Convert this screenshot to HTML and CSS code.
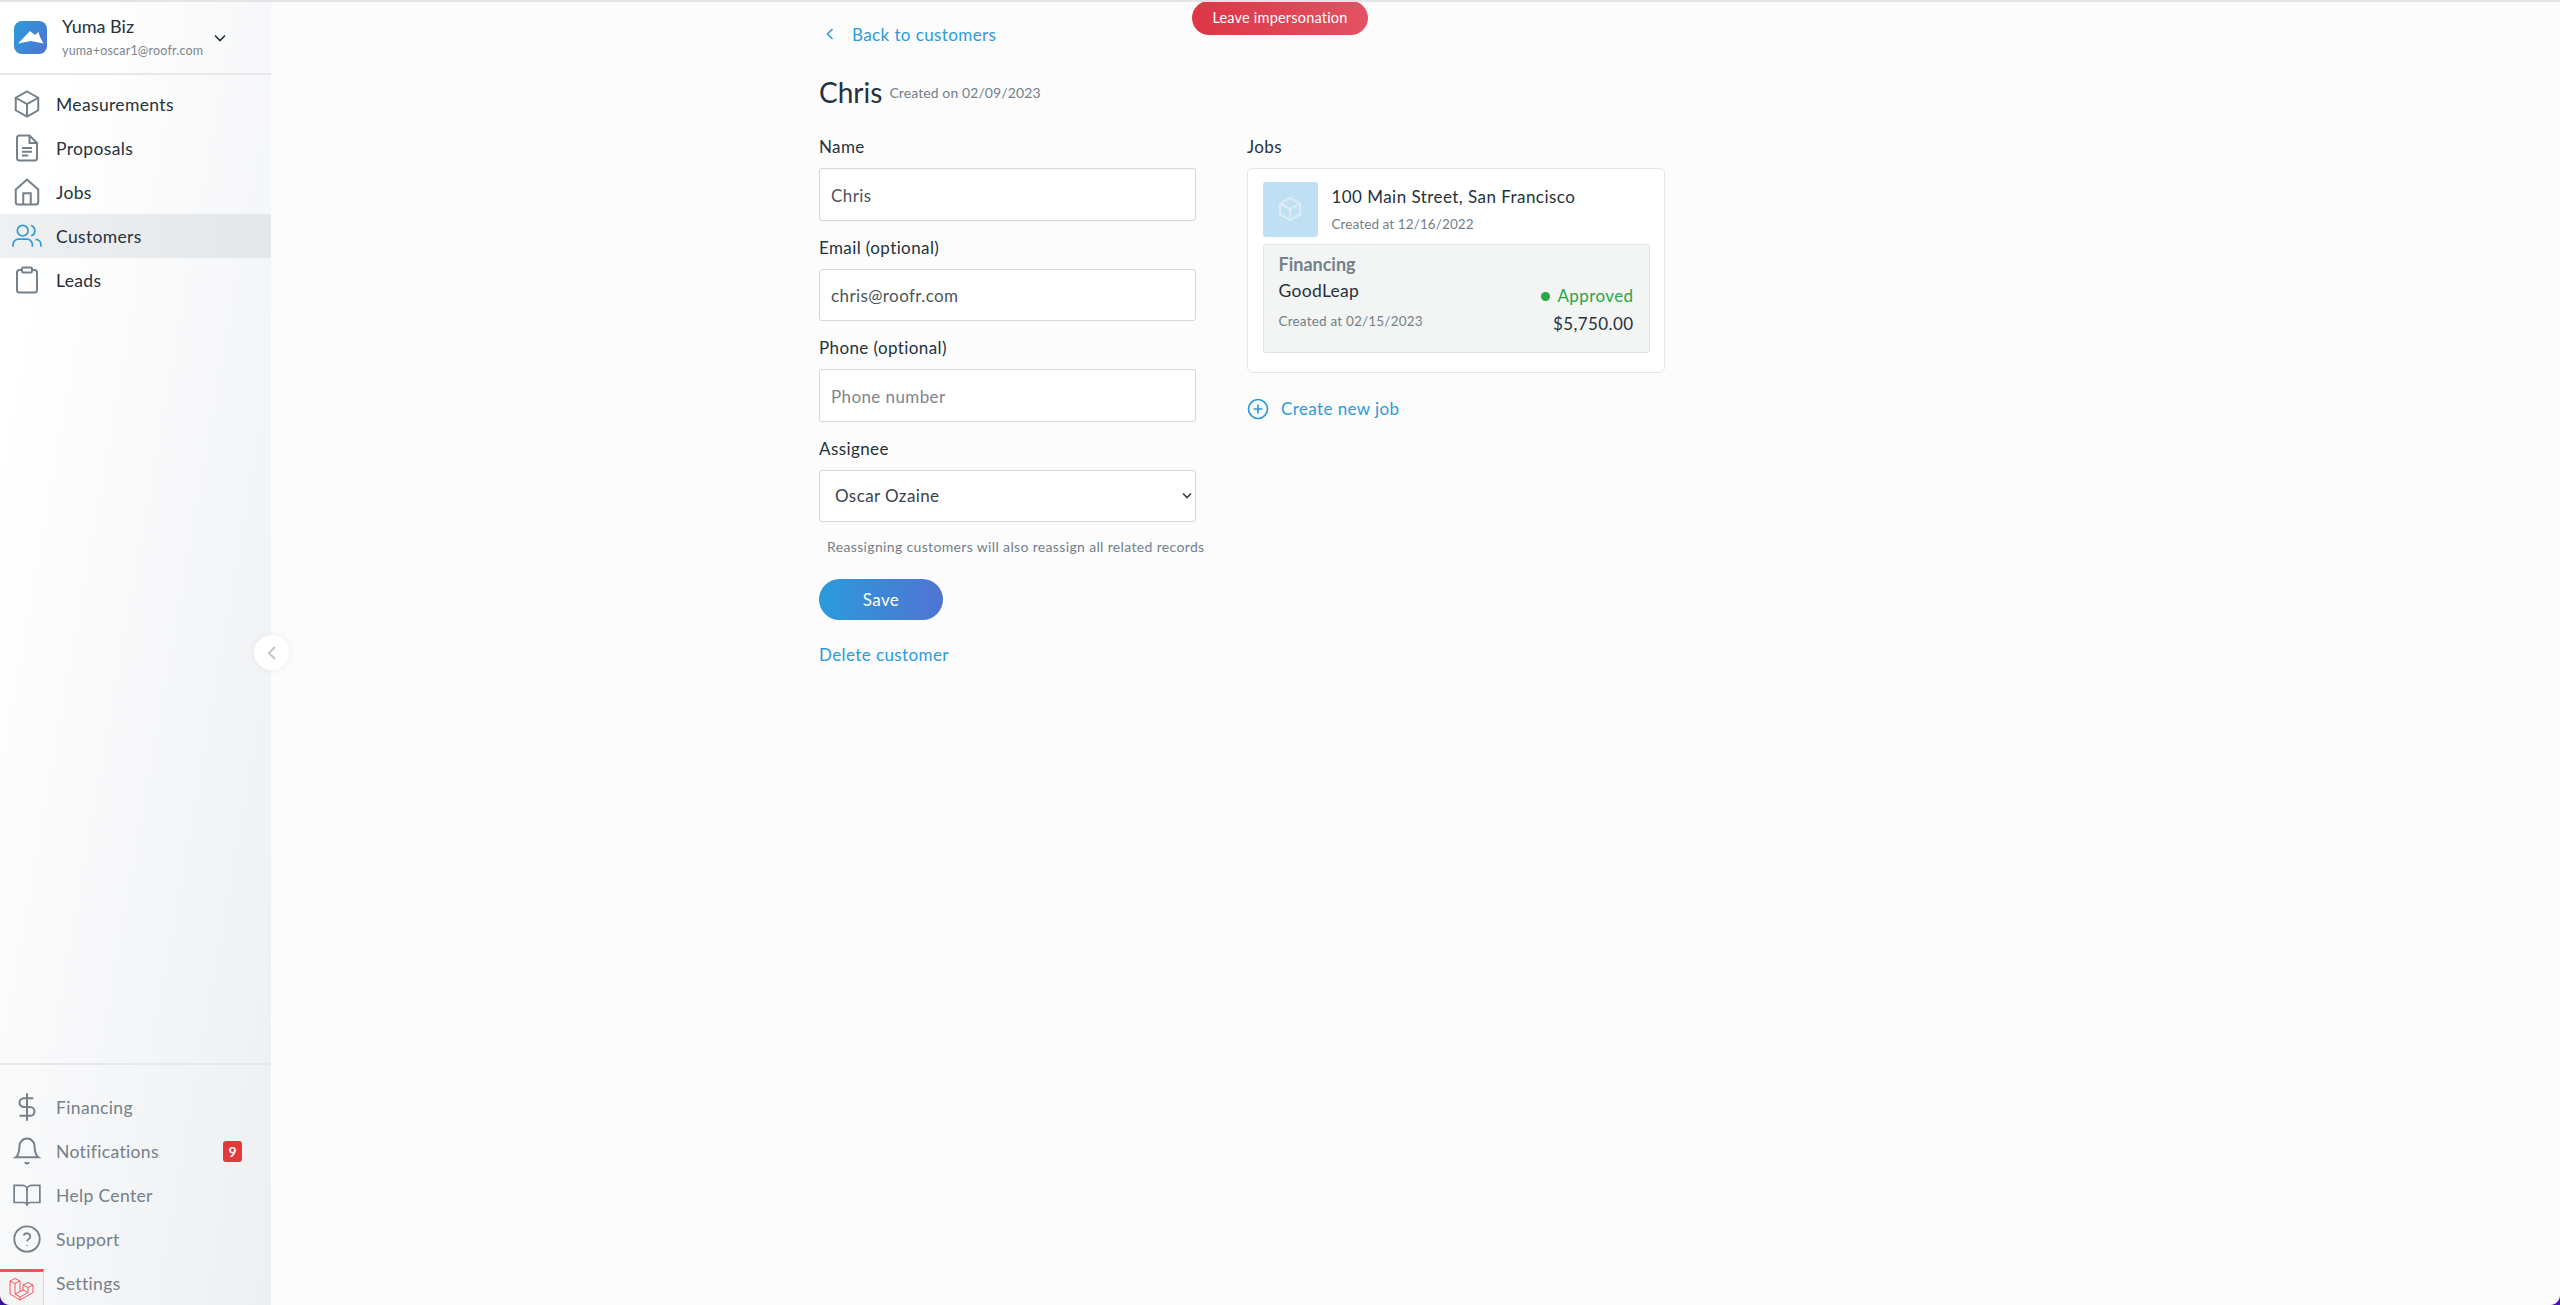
FILE: index.html
```html
<!DOCTYPE html>
<html lang="en">
  <head>
    <meta charset="UTF-8" />
    <title>Chris - Customers</title>
    <link rel="stylesheet" href="styles.css">
  </head>
  <body>
    <aside class="sidebar">
      <div class="account">
        <span class="logo">
          <svg width="33" height="33" viewBox="0 0 33 33"><path d="M4 22.5 L16 10 L21 14 L24.5 11 L26 16 L29.5 22.5 L17 20 Z" fill="#fff"/></svg>
        </span>
        <div class="account-text">
          <div class="account-name">Yuma Biz</div>
          <div class="account-email">yuma+oscar1@roofr.com</div>
        </div>
        <svg class="account-caret" width="16" height="16" viewBox="0 0 16 16"><path d="M3 5.5 L8 10.5 L13 5.5" fill="none" stroke="#25323c" stroke-width="1.6"/></svg>
      </div>

      <nav class="nav">
        <a class="nav-item">
          <svg class="nav-icon" viewBox="0 0 24 24"><path d="M12 2 L21 7 V17 L12 22 L3 17 V7 Z M3 7 L12 12 L21 7 M12 12 V22"/></svg>
          Measurements
        </a>
        <a class="nav-item">
          <svg class="nav-icon" viewBox="0 0 24 24"><path d="M4 4 a2 2 0 0 1 2 -2 H14 L20 8 V20 a2 2 0 0 1 -2 2 H6 a2 2 0 0 1 -2 -2 Z M14 2 V8 H20 M8 12 H16 M8 15 H16 M8 18 H13"/></svg>
          Proposals
        </a>
        <a class="nav-item">
          <svg class="nav-icon" viewBox="0 0 24 24"><path d="M3 10 L12 2 L21 10 V20 a2 2 0 0 1 -2 2 H5 a2 2 0 0 1 -2 -2 Z M9 22 V13 H15 V22"/></svg>
          Jobs
        </a>
        <a class="nav-item active">
          <svg class="nav-icon" viewBox="0 0 28 28"><circle cx="10" cy="9" r="5"/><path d="M1 24 V22 a5 5 0 0 1 5 -5 H14 a5 5 0 0 1 5 5 V24 M18 4.3 a5 5 0 0 1 0 9.4 M22 17.2 a5 5 0 0 1 5 4.8 V24"/></svg>
          Customers
        </a>
        <a class="nav-item">
          <svg class="nav-icon" viewBox="0 0 24 24"><path d="M8 4 H6 a2 2 0 0 0 -2 2 V20 a2 2 0 0 0 2 2 H18 a2 2 0 0 0 2 -2 V6 a2 2 0 0 0 -2 -2 H16 M9 2 H15 a1 1 0 0 1 1 1 V5 a1 1 0 0 1 -1 1 H9 a1 1 0 0 1 -1 -1 V3 a1 1 0 0 1 1 -1 Z"/></svg>
          Leads
        </a>
      </nav>

      <nav class="nav nav-bottom">
        <a class="nav-item muted">
          <svg class="nav-icon" viewBox="0 0 24 24"><path d="M12 1 V23 M17 5 H9.5 a3.5 3.5 0 0 0 0 7 H14.5 a3.5 3.5 0 0 1 0 7 H6"/></svg>
          Financing
        </a>
        <a class="nav-item muted">
          <svg class="nav-icon" viewBox="0 0 24 24"><path d="M18 8 a6 6 0 0 0 -12 0 C6 15 3 17 3 17 H21 S18 15 18 8 M10.3 21 a2 2 0 0 0 3.4 0"/></svg>
          Notifications
          <span class="badge">9</span>
        </a>
        <a class="nav-item muted">
          <svg class="nav-icon" viewBox="-1 -2 28 28"><path d="M1 3 H9 a4 4 0 0 1 4 4 V22 a3 3 0 0 0 -3 -3 H1 Z M25 3 H17 a4 4 0 0 0 -4 4 V22 a3 3 0 0 1 3 -3 H25 Z"/></svg>
          Help Center
        </a>
        <a class="nav-item muted">
          <svg class="nav-icon" viewBox="-1 -1 26 26"><circle cx="12" cy="12" r="11"/><path d="M9 9 a3 3 0 0 1 5.8 1 c0 2 -2.8 2.5 -2.8 4 M12 17.5 V18"/></svg>
          Support
        </a>
        <a class="nav-item muted">
          <span class="nav-spacer"></span>
          Settings
        </a>
      </nav>

      <button class="collapse">
        <svg width="14" height="16" viewBox="0 0 14 16"><path d="M10 2 L4 8 L10 14" fill="none" stroke="#c4c7c9" stroke-width="2.2"/></svg>
      </button>
    </aside>

    <!-- debug bar toggle, sits over the sidebar corner -->
    <div class="debugbar">
      <svg width="25" height="24" viewBox="-1 -1 25 24" fill="none" stroke="#f9505a" stroke-width="1"><path d="M0 3 L5 .5 L10 3 L5 5.5 Z M0 3 V16 L10 22 L23 14.5 V7 L18 4.5 L13 7 V12 L10 13.5 V3 M5 5.5 V16 L10 19 L18 14.5 V9.5 M13 7 L18 9.5 L23 7 M13 12 L18 14.5 M10 13.5 L5 16 M10 19 V22"/></svg>
    </div>

    <a class="impersonation">Leave impersonation</a>

    <main class="main">
      <a class="back">
        <svg width="12" height="14" viewBox="0 0 12 14"><path d="M8.5 2 L3.5 7 L8.5 12" fill="none" stroke="#2b9bdb" stroke-width="1.6"/></svg>
        Back to customers
      </a>

      <div class="title-row">
        <h1>Chris</h1>
        <span class="title-date">Created on 02/09/2023</span>
      </div>

      <div class="columns">
        <form class="form">
          <label class="field-label">Name</label>
          <input class="field" type="text" value="Chris">

          <label class="field-label">Email (optional)</label>
          <input class="field" type="text" value="chris@roofr.com">

          <label class="field-label">Phone (optional)</label>
          <input class="field" type="text" placeholder="Phone number">

          <label class="field-label">Assignee</label>
          <div class="select">
            Oscar Ozaine
            <svg width="10" height="8" viewBox="0 0 10 8"><path d="M1 1.5 L5 5.5 L9 1.5" fill="none" stroke="#3c4348" stroke-width="1.6"/></svg>
          </div>
          <p class="hint">Reassigning customers will also reassign all related records</p>

          <button class="save" type="button">Save</button>
          <a class="delete">Delete customer</a>
        </form>

        <section class="jobs">
          <div class="field-label">Jobs</div>
          <div class="job-card">
            <div class="job-head">
              <span class="job-thumb">
                <svg width="24" height="26" viewBox="0 0 24 26" fill="none" stroke="#dbecf6" stroke-width="2"><path d="M12 2 L22 7.5 V18.5 L12 24 L2 18.5 V7.5 Z M2 7.5 L12 13 L22 7.5 M12 13 V24"/></svg>
              </span>
              <div class="job-text">
                <div class="job-address">100 Main Street, San Francisco</div>
                <div class="job-date">Created at 12/16/2022</div>
              </div>
            </div>
            <div class="financing">
              <div>
                <div class="financing-title">Financing</div>
                <div class="financing-name">GoodLeap</div>
                <div class="financing-date">Created at 02/15/2023</div>
              </div>
              <div class="financing-right">
                <div class="status"><span class="status-dot"></span>Approved</div>
                <div class="amount">$5,750.00</div>
              </div>
            </div>
          </div>
          <a class="create-job">
            <svg width="22" height="22" viewBox="0 0 22 22" fill="none" stroke="#2b9bdb" stroke-width="1.7"><circle cx="11" cy="11" r="9.5"/><path d="M11 6.5 V15.5 M6.5 11 H15.5"/></svg>
            Create new job
          </a>
        </section>
      </div>
    </main>

    <span class="corner corner-left"></span>
    <span class="corner corner-right"></span>
  </body>
</html>
```

FILE: styles.css
```css
* {
  margin: 0;
  padding: 0;
  box-sizing: border-box;
}

html,
body {
  height: 100%;
}

body {
  display: flex;
  height: 1305px;
  overflow: hidden;
  position: relative;
  background: #fcfcfc;
  border-top: 2px solid #e2e4e6;
  font-family: Lato, "Open Sans", sans-serif;
  color: #25323c;
}

a {
  cursor: pointer;
}

/* Sidebar */
.sidebar {
  width: 271px;
  flex-shrink: 0;
  display: flex;
  flex-direction: column;
  position: relative;
  background: linear-gradient(100deg, #ffffff 15%, #edeff2 100%);
}

.account {
  display: flex;
  align-items: center;
  height: 73px;
  padding-left: 14px;
  border-bottom: 2px solid #e6e8ea;
}

.logo {
  width: 33px;
  height: 33px;
  border-radius: 8px;
  background: linear-gradient(120deg, #2b9bdb, #4f74d3);
  display: flex;
  align-items: center;
  justify-content: center;
  margin-right: 15px;
}

.account-text {
  width: 150px;
}

.account-name {
  font-size: 18px;
  line-height: 22px;
  margin-top: -1px;
}

.account-email {
  font-size: 12.5px;
  line-height: 18px;
  margin-top: 5px;
  color: #7b858d;
  letter-spacing: 0.2px;
  white-space: nowrap;
}

.nav {
  display: flex;
  flex-direction: column;
  padding-top: 7px;
}

.nav-item {
  display: flex;
  align-items: center;
  height: 44px;
  font-size: 17.5px;
  color: #25323c;
  letter-spacing: 0.35px;
}

.nav-item.muted {
  color: #74808a;
}

.nav-item.active {
  background: linear-gradient(90deg, #eef0f2, #e4e7e9);
}

.nav-icon {
  width: 30px;
  height: 30px;
  margin: 0 14px 0 12px;
  fill: none;
  stroke: #74808a;
  stroke-width: 1.6;
  flex-shrink: 0;
}

.nav-item.active .nav-icon {
  stroke: #2b9bdb;
}

.nav-spacer {
  width: 30px;
  margin: 0 14px 0 12px;
}

.nav-bottom {
  margin-top: auto;
  border-top: 2px solid #e6e8ea;
  padding: 20px 0 0;
}

.badge {
  margin-left: auto;
  margin-right: 29px;
  width: 19px;
  height: 21px;
  border-radius: 3px;
  background: #e5383b;
  color: #fff;
  font-size: 14px;
  font-weight: 700;
  letter-spacing: 0;
  display: flex;
  align-items: center;
  justify-content: center;
}

.collapse {
  position: absolute;
  left: 254px;
  top: 633px;
  width: 35px;
  height: 35px;
  border: none;
  border-radius: 50%;
  background: #fff;
  box-shadow: 0 0 10px rgba(0, 0, 0, 0.06);
  display: flex;
  align-items: center;
  justify-content: center;
}

/* Debug bar toggle */
.debugbar {
  position: absolute;
  left: 0;
  bottom: 0;
  width: 44px;
  height: 36px;
  background: #f5f5f5;
  border-top: 3px solid #f9505a;
  border-right: 1px solid #dcdcdc;
  display: flex;
  align-items: center;
  justify-content: center;
}

/* Rounded window corners, the dark desktop shows through */
.corner {
  position: absolute;
  bottom: 0;
  width: 10px;
  height: 10px;
}

.corner-left {
  left: 0;
  background: radial-gradient(circle at 100% 0, transparent 9.5px, #35109a 10.5px);
}

.corner-right {
  right: 0;
  background: radial-gradient(circle at 0 0, transparent 9.5px, #4a12c4 10.5px);
}

.impersonation {
  position: absolute;
  left: 1192px;
  top: -1px;
  width: 176px;
  height: 34px;
  padding-bottom: 2px;
  border-radius: 17px;
  background: linear-gradient(90deg, #dd3646, #e25264);
  color: #fff;
  font-size: 14.5px;
  letter-spacing: 0.2px;
  display: flex;
  align-items: center;
  justify-content: center;
}

/* Main content */
.main {
  flex: 1;
  padding: 20px 0 0 548px;
}

.back {
  display: flex;
  align-items: center;
  gap: 16px;
  height: 24px;
  color: #2b9bdb;
  font-size: 17px;
  letter-spacing: 0.4px;
  margin-left: 5px;
}

.title-row {
  display: flex;
  align-items: center;
  gap: 7px;
  margin-top: 28px;
}

h1 {
  font-size: 28px;
  line-height: 36px;
  font-weight: 400;
}

.title-date {
  font-size: 14px;
  color: #74808a;
  letter-spacing: 0.1px;
}

.columns {
  display: flex;
  gap: 51px;
  margin-top: 25px;
}

.form {
  width: 377px;
  display: flex;
  flex-direction: column;
}

.field-label {
  display: block;
  font-size: 17px;
  line-height: 24px;
  letter-spacing: 0.4px;
  margin-bottom: 9px;
}

.field {
  height: 52.5px;
  margin-bottom: 15px;
  padding: 2px 11px 0;
  border: 1.5px solid #d3d6da;
  border-radius: 3px;
  background: #fff;
  font-family: inherit;
  font-size: 17px;
  letter-spacing: 0.4px;
  color: #4a555d;
}

.field::placeholder {
  color: #7d868d;
}

.select {
  height: 52.5px;
  padding: 0 3.5px 0 15px;
  border: 1.5px solid #d3d6da;
  border-radius: 3px;
  background: #fff;
  font-size: 17px;
  letter-spacing: 0.4px;
  color: #3c4348;
  display: flex;
  align-items: center;
  justify-content: space-between;
}

.hint {
  margin: 15px 0 0 8px;
  font-size: 14px;
  line-height: 20px;
  color: #74808a;
  letter-spacing: 0.35px;
  white-space: nowrap;
}

.save {
  width: 124px;
  height: 41px;
  margin-top: 22px;
  border: none;
  border-radius: 21px;
  background: linear-gradient(90deg, #2b9bdb, #4f74d3);
  color: #fff;
  font-family: inherit;
  font-size: 17px;
  letter-spacing: 0.4px;
}

.delete {
  margin-top: 23px;
  color: #2b9bdb;
  font-size: 17px;
  line-height: 24px;
  letter-spacing: 0.4px;
}

.jobs {
  width: 418px;
}

.job-card {
  height: 205px;
  padding: 12.5px 14.5px;
  border: 1.5px solid #e3e5e8;
  border-radius: 6px;
  background: #fff;
}

.job-head {
  display: flex;
  align-items: center;
  gap: 14px;
  margin-bottom: 7px;
}

.job-thumb {
  width: 55px;
  height: 55px;
  border-radius: 3px;
  background: #bfe0f2;
  display: flex;
  align-items: center;
  justify-content: center;
}

.job-text {
  margin-top: -2px;
}

.job-address {
  font-size: 17px;
  line-height: 24px;
  letter-spacing: 0.45px;
}

.job-date,
.financing-date {
  font-size: 13.5px;
  color: #74808a;
  letter-spacing: 0.2px;
}

.job-date {
  margin-top: 7px;
  letter-spacing: 0.1px;
}

.financing {
  height: 109px;
  padding: 7.5px 15px;
  border: 1.5px solid #e0e3e6;
  border-radius: 3px;
  background: #f3f5f5;
  display: flex;
  justify-content: space-between;
}

.financing-title {
  font-size: 18px;
  line-height: 24px;
  font-weight: 700;
  color: #74808a;
}

.financing-name {
  font-size: 17.5px;
  line-height: 24px;
  margin-top: 3px;
  letter-spacing: 0.3px;
}

.financing-date {
  margin-top: 10px;
}

.financing-right {
  display: flex;
  flex-direction: column;
  align-items: flex-end;
  padding-top: 32px;
}

.status {
  display: flex;
  align-items: center;
  gap: 7px;
  font-size: 17px;
  line-height: 24px;
  letter-spacing: 0.4px;
  color: #27a844;
}

.status-dot {
  width: 9px;
  height: 9px;
  border-radius: 50%;
  background: #27a844;
}

.amount {
  margin-top: 4px;
  font-size: 17px;
  line-height: 24px;
  letter-spacing: 0.4px;
}

.create-job {
  display: flex;
  align-items: center;
  gap: 12px;
  margin-top: 24px;
  color: #2b9bdb;
  font-size: 17px;
  line-height: 24px;
  letter-spacing: 0.4px;
}
```
